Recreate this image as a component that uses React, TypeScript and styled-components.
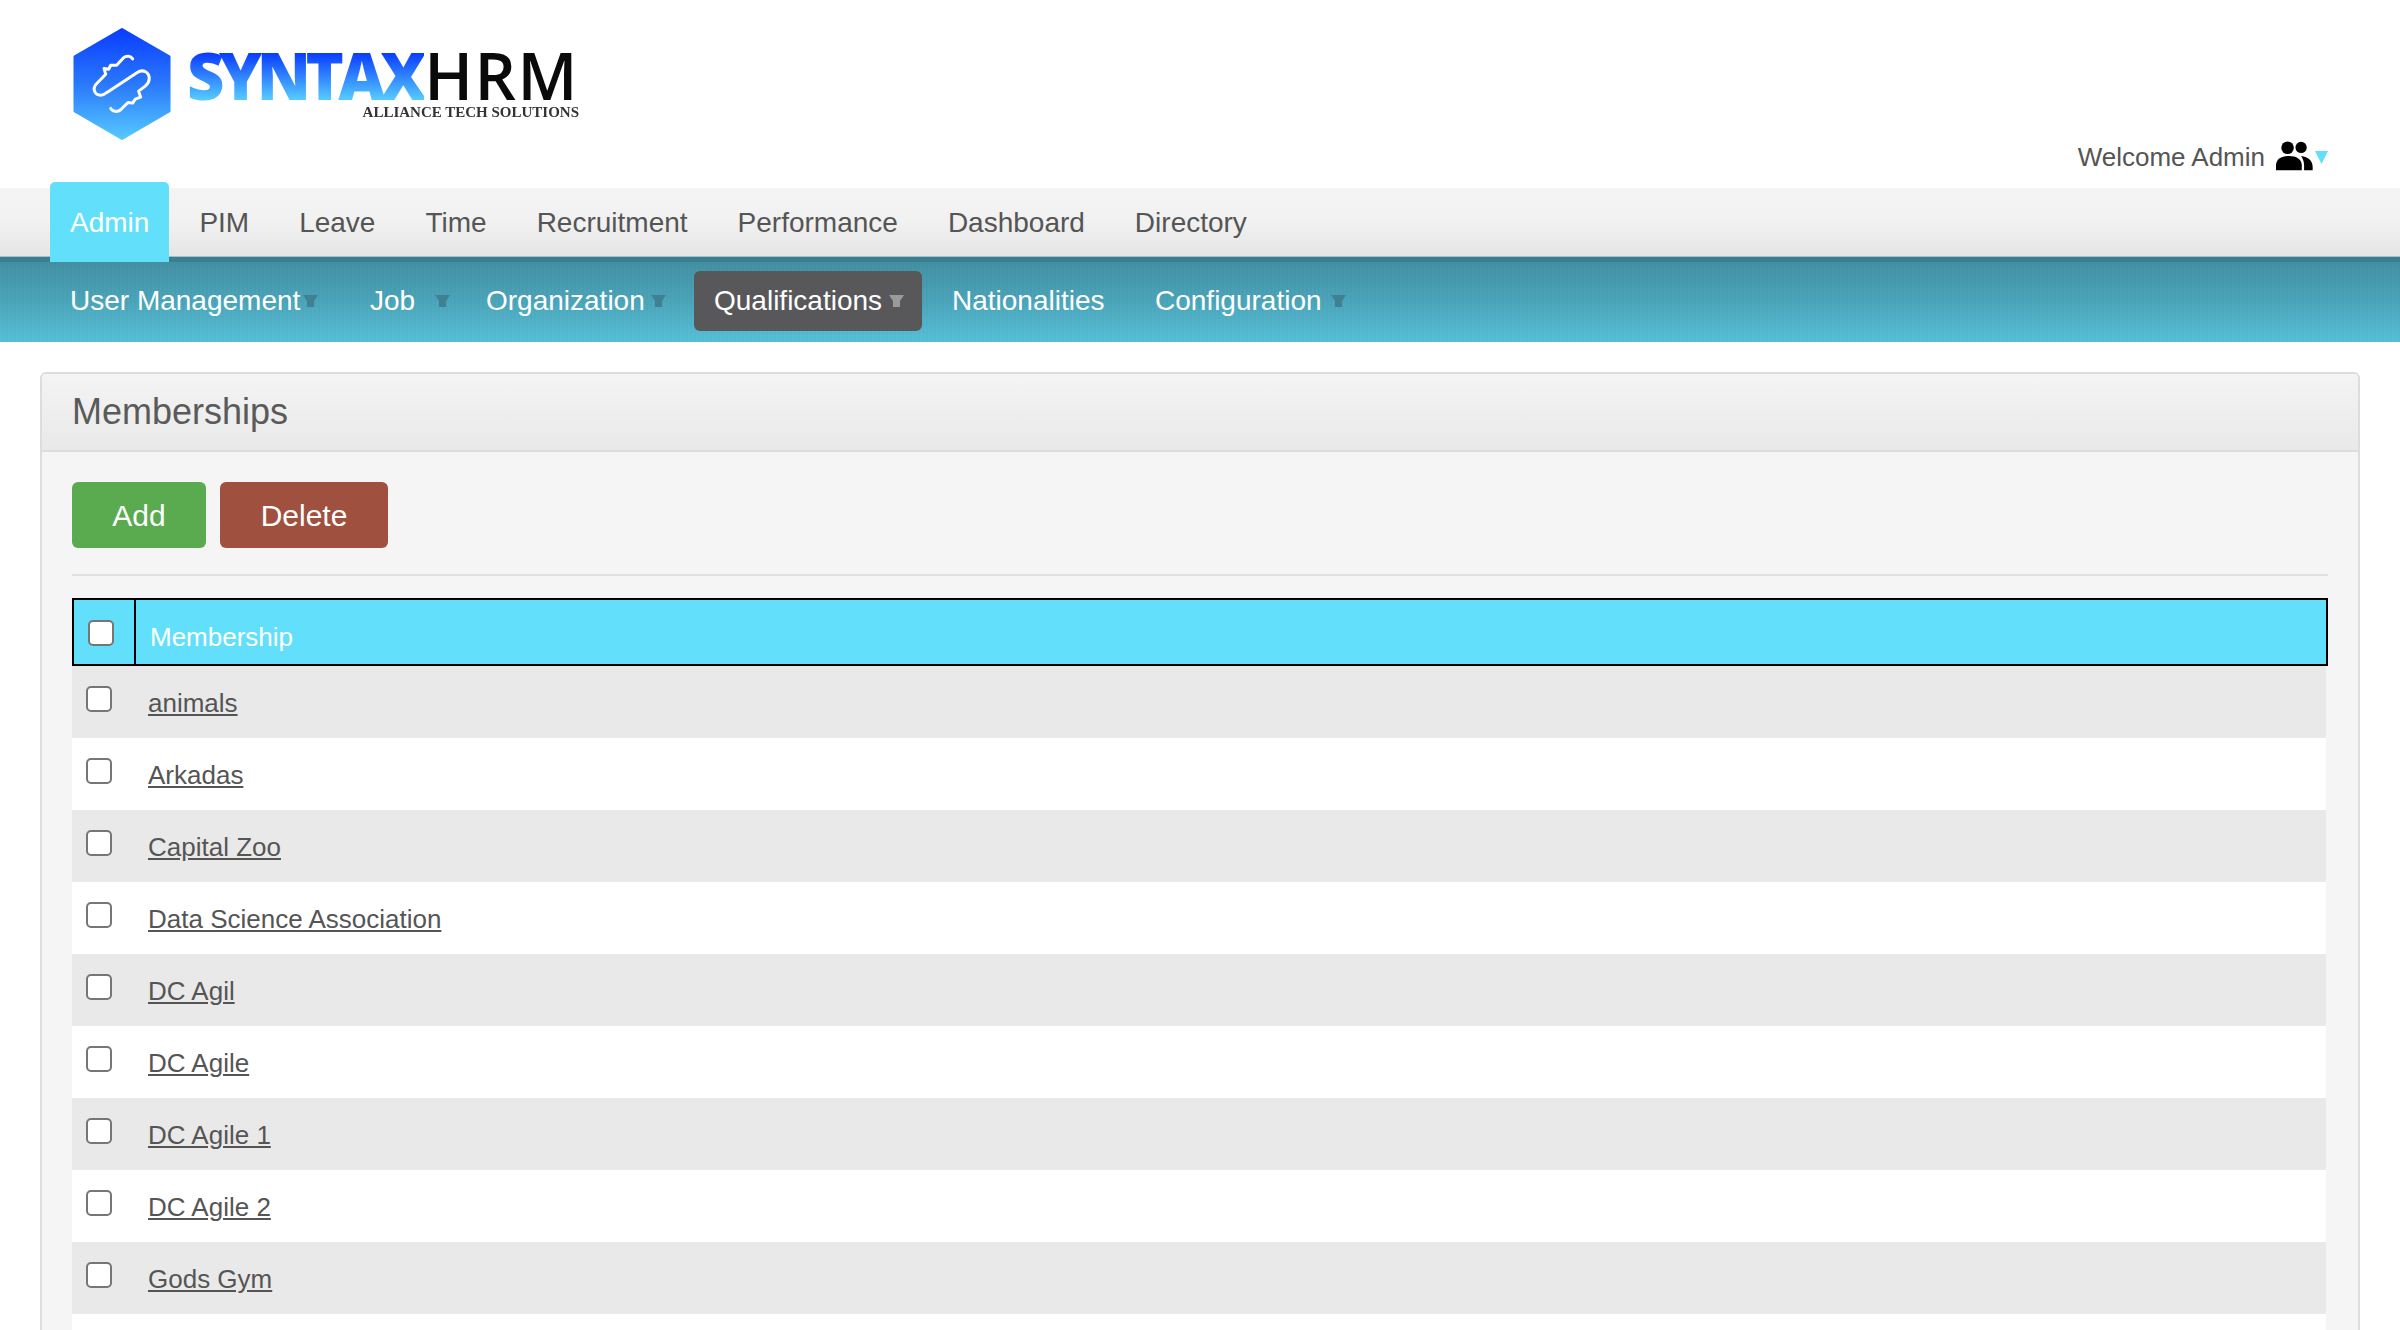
import React from "react";
import styled, { createGlobalStyle } from "styled-components";

const GlobalStyle = createGlobalStyle`
  html, body { margin: 0; padding: 0; background: #fff; overflow: hidden; }
  body { font-family: "Liberation Sans", Arial, sans-serif; color: #555; }
  * { box-sizing: border-box; }
`;

const Page = styled.div`
  width: 2400px;
  height: 1330px;
  overflow: hidden;
`;

const Header = styled.header`
  height: 188px;
  display: flex;
  justify-content: space-between;
  align-items: flex-start;
  padding: 28px 72px 0 73px;
`;

const Logo = styled.div`
  display: flex;
  align-items: flex-start;
  filter: blur(0.5px);
`;

const LogoWords = styled.div`
  margin: 17px 0 0 16px;
  display: flex;
  flex-direction: column;
  width: 392px;
`;

const LogoLine = styled.div`
  display: flex;
  align-items: flex-start;
  height: 61px;
`;

const LogoSyntax = styled.span`
  font: 800 65px/61px "Open Sans", sans-serif;
  letter-spacing: -5.5px;
  width: 239px;
  background: linear-gradient(180deg, #0a3dff 14%, #55c8ff 88%);
  -webkit-background-clip: text;
  background-clip: text;
  color: transparent;
`;

const LogoHrm = styled.span`
  font: 600 65px/61px "Open Sans", sans-serif;
  letter-spacing: 1.5px;
  color: #0a0a0a;
`;

const LogoTag = styled.span`
  align-self: flex-end;
  margin-top: -1px;
  font: 700 15px/15px "Liberation Serif", serif;
  letter-spacing: 0;
  color: #333;
  white-space: nowrap;
`;

const Welcome = styled.div`
  margin-top: 112px;
  display: flex;
  align-items: center;
  font-size: 26px;
  line-height: 34px;
  color: #555;
`;

const UserIcon = styled.svg`
  width: 37px;
  height: 30px;
  margin: -2px 0 0 11px;
  fill: #000;
`;

const UserCaret = styled.svg`
  width: 13px;
  height: 13px;
  margin-left: 2px;
  fill: #62e0fb;
`;

const MainNav = styled.nav`
  position: relative;
  z-index: 1;
  height: 68px;
  padding-left: 50px;
  display: flex;
  align-items: center;
  gap: 10px;
  background: linear-gradient(180deg, #f4f4f4 0%, #f1f1f1 50%, #e5e5e5 100%);
`;

const MainTab = styled.a<{ $active?: boolean }>`
  height: 80px;
  padding: 1px 20px 0;
  display: flex;
  align-items: center;
  font-size: 28px;
  border-radius: 5px 5px 0 0;
  color: ${(p) => (p.$active ? "#fff" : "#555")};
  background: ${(p) => (p.$active ? "#62e0fb" : "transparent")};
`;

const SubNav = styled.nav`
  height: 86px;
  padding: 14px 0 0 50px;
  display: flex;
  align-items: flex-start;
  gap: 10px;
  border-top: 1px solid #9fc3cb;
  box-shadow: inset 0 5px 0 #3a7e8f;
  background:
    repeating-linear-gradient(90deg, rgba(255, 255, 255, 0.012) 0 2px, rgba(0, 0, 0, 0.012) 2px 4px),
    linear-gradient(180deg, #418d9f 0%, #4aa3b8 50%, #55c0d8 100%);
`;

const SubItem = styled.a<{ $width: number; $padRight: number; $active?: boolean }>`
  width: ${(p) => p.$width}px;
  height: 60px;
  padding: 0 ${(p) => p.$padRight}px 0 20px;
  display: flex;
  align-items: center;
  justify-content: space-between;
  font-size: 28px;
  color: #fff;
  border-radius: 6px;
  background: ${(p) => (p.$active ? "#58585a" : "transparent")};
`;

const SubCaret = styled.svg<{ $active?: boolean }>`
  width: 15px;
  height: 13px;
  flex: none;
  fill: ${(p) => (p.$active ? "#9a9a9a" : "#3f8093")};
`;

const Main = styled.main`
  padding: 30px 40px 0;
`;

const Panel = styled.section`
  border: 2px solid #ddd;
  border-radius: 6px;
  background: #f5f5f5;
`;

const PanelHead = styled.div`
  height: 78px;
  padding-left: 30px;
  display: flex;
  align-items: center;
  border-bottom: 2px solid #ddd;
  border-radius: 4px 4px 0 0;
  background: linear-gradient(180deg, #f4f4f4, #e9e9e9);
`;

const PanelTitle = styled.h1`
  margin: 0;
  font-size: 36px;
  font-weight: 400;
  color: #5a5a5a;
`;

const PanelBody = styled.div`
  padding: 30px;
`;

const Actions = styled.div`
  display: flex;
  gap: 14px;
  padding-bottom: 26px;
  border-bottom: 2px solid #e0e0e0;
  margin-bottom: 22px;
`;

const ActionButton = styled.button<{ $bg: string; $width: number }>`
  width: ${(p) => p.$width}px;
  height: 66px;
  padding: 2px 0 0;
  border: 0;
  border-radius: 6px;
  font: 400 30px "Liberation Sans", Arial, sans-serif;
  color: #fff;
  background: ${(p) => p.$bg};
`;

const TableHead = styled.div`
  height: 68px;
  display: flex;
  border: 2px solid #000;
  background: #62e0fb;
`;

const HeadCheckCell = styled.div`
  width: 62px;
  flex: none;
  padding: 20px 0 0 14px;
  border-right: 2px solid #000;
`;

const HeadLabel = styled.div`
  padding: 20px 0 0 14px;
  font-size: 26px;
  line-height: 34px;
  color: #fff;
`;

const Row = styled.div<{ $odd: boolean }>`
  height: 72px;
  margin-right: 2px;
  display: flex;
  align-items: center;
  padding-left: 14px;
  background: ${(p) => (p.$odd ? "#e9e9e9" : "#fff")};
`;

const Check = styled.input.attrs({ type: "checkbox" })<{ $raise?: boolean }>`
  appearance: none;
  display: block;
  width: 26px;
  height: 26px;
  margin: ${(p) => (p.$raise ? "-6px 0 0" : "0")};
  flex: none;
  border: 2px solid #767676;
  border-radius: 5px;
  background: #fff;
`;

const RowLink = styled.a`
  margin: 2px 0 0 36px;
  font-size: 26px;
  line-height: 34px;
  color: #555;
  text-decoration: underline;
`;

const mainTabs = ["Admin", "PIM", "Leave", "Time", "Recruitment", "Performance", "Dashboard", "Directory"];

const subItems: { label: string; width: number; padRight: number; caret: boolean }[] = [
  { label: "User Management", width: 290, padRight: 22, caret: true },
  { label: "Job", width: 106, padRight: 6, caret: true },
  { label: "Organization", width: 218, padRight: 18, caret: true },
  { label: "Qualifications", width: 228, padRight: 18, caret: true },
  { label: "Nationalities", width: 193, padRight: 18, caret: false },
  { label: "Configuration", width: 229, padRight: 18, caret: true },
];

const rows = [
  "animals",
  "Arkadas",
  "Capital Zoo",
  "Data Science Association",
  "DC Agil",
  "DC Agile",
  "DC Agile 1",
  "DC Agile 2",
  "Gods Gym",
  "",
];

const HexLogo = () => (
  <svg width="98" height="112" viewBox="40 38 292 337">
    <defs>
      <linearGradient id="hexFill" x1="0" y1="0" x2="0" y2="1">
        <stop offset="0" stopColor="#0a3dff" />
        <stop offset="0.5" stopColor="#2a78fb" />
        <stop offset="1" stopColor="#55c8ff" />
      </linearGradient>
    </defs>
    <path
      d="M186 42 L328 124 V288 L186 371 L44 288 V124 Z"
      fill="url(#hexFill)"
      stroke="url(#hexFill)"
      strokeWidth="8"
      strokeLinejoin="round"
    />
    <path
      d="M218 131 C212 122 200 120 190 128 L170 150 L152 150 L146 162 L132 160 L137 177 L108 207 C96 222 104 240 122 240 C130 240 136 236 142 231 L232 172 C250 160 268 172 268 190 C268 200 264 206 256 213 L236 228 L242 246 L226 252 L218 264 L204 262 L182 284 C172 292 158 290 152 280"
      fill="none"
      stroke="#fff"
      strokeWidth="9"
      strokeLinecap="round"
      strokeLinejoin="round"
    />
  </svg>
);

const PeopleGlyph = () => (
  <UserIcon viewBox="827 65 112 90">
    <circle cx="862" cy="85" r="19" />
    <circle cx="903" cy="84" r="17" />
    <path d="M827 153 V138 C827 120 843 110 866 110 C889 110 905 120 905 138 V153 Z" />
    <path d="M912 153 H938 V143 C938 125 925 112 903 110 C908 117 912 127 912 138 Z" />
  </UserIcon>
);

export default function App() {
  return (
    <Page>
      <GlobalStyle />
      <Header>
        <Logo>
          <HexLogo />
          <LogoWords>
            <LogoLine>
              <LogoSyntax>SYNTAX</LogoSyntax>
              <LogoHrm>HRM</LogoHrm>
            </LogoLine>
            <LogoTag>ALLIANCE TECH SOLUTIONS</LogoTag>
          </LogoWords>
        </Logo>
        <Welcome>
          Welcome Admin
          <PeopleGlyph />
          <UserCaret viewBox="0 0 13 13">
            <path d="M0 0 H13 L6.5 13 Z" />
          </UserCaret>
        </Welcome>
      </Header>
      <MainNav>
        {mainTabs.map((t, i) => (
          <MainTab key={t} $active={i === 0}>
            {t}
          </MainTab>
        ))}
      </MainNav>
      <SubNav>
        {subItems.map((s) => {
          const active = s.label === "Qualifications";
          return (
            <SubItem key={s.label} $width={s.width} $padRight={s.padRight} $active={active}>
              {s.label}
              {s.caret && (
                <SubCaret viewBox="0 0 15 13" $active={active}>
                  <path d="M0 0 H15 L11 6 V12 H4 V6 Z" />
                </SubCaret>
              )}
            </SubItem>
          );
        })}
      </SubNav>
      <Main>
        <Panel>
          <PanelHead>
            <PanelTitle>Memberships</PanelTitle>
          </PanelHead>
          <PanelBody>
            <Actions>
              <ActionButton $bg="#5aaa50" $width={134}>
                Add
              </ActionButton>
              <ActionButton $bg="#a0503e" $width={168}>
                Delete
              </ActionButton>
            </Actions>
            <TableHead>
              <HeadCheckCell>
                <Check />
              </HeadCheckCell>
              <HeadLabel>Membership</HeadLabel>
            </TableHead>
            {rows.map((r, i) => (
              <Row key={i} $odd={i % 2 === 0}>
                <Check $raise />
                <RowLink>{r}</RowLink>
              </Row>
            ))}
          </PanelBody>
        </Panel>
      </Main>
    </Page>
  );
}
